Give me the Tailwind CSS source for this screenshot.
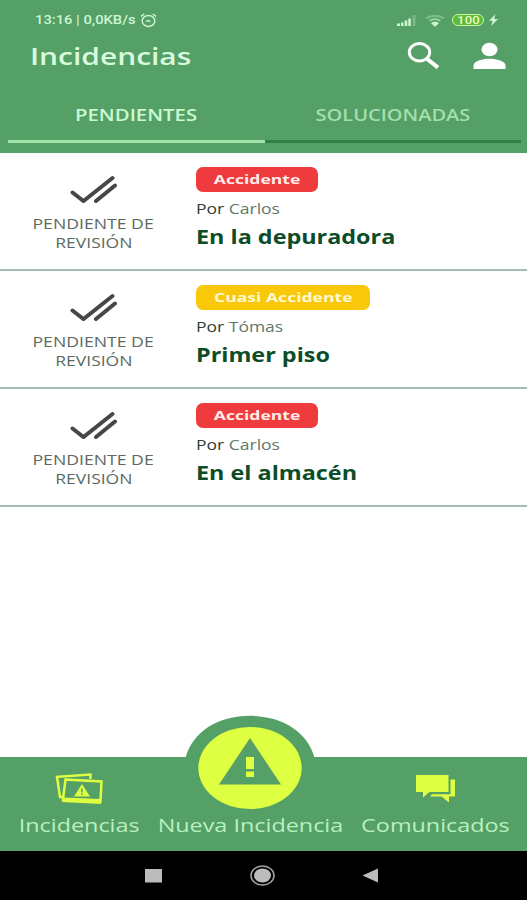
<!DOCTYPE html>
<html lang="es">
<head>
    <meta charset="UTF-8">
    <meta name="viewport" content="width=device-width, initial-scale=1.0">
    <title>Incidencias</title>
    <script src="https://cdn.jsdelivr.net/npm/@tailwindcss/browser@4"></script>
</head>
<body class="w-[527px] h-[900px] overflow-hidden bg-[#fefffe] flex flex-col whitespace-nowrap font-['Open_Sans','Noto_Sans',sans-serif]">
    <header class="h-[153px] shrink-0 bg-[#54a066] flex flex-col">
        <!-- Status bar -->
        <div class="h-8 pt-[11px] pl-[35px] pr-[29px] flex items-start justify-between text-[#cdf5d2]">
            <div class="flex">
                <div class="w-[105px] h-[18px]"><span class="block w-max origin-left scale-x-[1.23] font-[Roboto] font-medium text-xs leading-[18px]">13:16 | 0,0KB/s</span></div>
                <svg class="w-[17px] h-[15px] mt-[2px]" viewBox="0 0 17 15" fill="none" stroke="currentColor" stroke-width="1.4">
                    <ellipse cx="8.5" cy="8" rx="6.3" ry="5.5"/>
                    <path d="M1 3.4 4.3 1M16 3.4 12.7 1M6 8h4.5"/>
                </svg>
            </div>
            <div class="flex">
                <svg class="w-5 h-3 mt-[4px]" viewBox="0 0 20 12">
                    <path fill="currentColor" d="M0 8.5h3V11H0zM4 7.5h2.6V11H4zM7.7 5.5h2.6V11H7.7zM11.3 3.5h2.5V11h-2.5z"/>
                    <path fill="currentColor" opacity=".3" d="M15.5 0h3v11h-3z"/>
                </svg>
                <svg class="w-5 h-3 ml-2 mt-[4px]" viewBox="0 0 20 12" fill="none" stroke="currentColor">
                    <path stroke-width="2" opacity=".35" d="M1 3.3Q10-1.5 19 3.3"/>
                    <path stroke-width="1.7" opacity=".6" d="M4.5 5.8Q10 2.5 15.5 5.8"/>
                    <path fill="currentColor" stroke="none" d="M6 8.2Q10 5.5 14 8.2L10 11.8z"/>
                </svg>
                <div class="w-8 h-3 ml-[7px] mt-[3px] rounded-full border-[1.5px] border-[#cdf5a0] bg-[#5fb93c] flex items-center justify-center">
                    <span class="block scale-x-[1.2] font-[Roboto] font-medium text-[11px] leading-none text-[#e4fbc0]">100</span>
                </div>
                <svg class="w-[9px] h-3 ml-[5px] mt-[3px]" viewBox="0 0 9 12"><path fill="currentColor" d="M6.5 0 0 6.7h3.6L2.2 12 9 5H5.2z"/></svg>
            </div>
        </div>
        <!-- Title bar -->
        <div class="h-[50px] pl-[30px] pr-[21px] flex justify-between text-white">
            <h1 class="w-max h-12 origin-left scale-x-[1.3] font-semibold text-[23px] leading-[49px] text-[#d9fadd]">Incidencias</h1>
            <div class="flex pt-[10px]">
                <svg class="w-[33px] h-[27px]" viewBox="0 0 33 27" fill="none" stroke="currentColor">
                    <ellipse cx="12.5" cy="10.2" rx="10.2" ry="8.7" stroke-width="3"/>
                    <path stroke-width="4" d="M19.5 16.5 31 25.5"/>
                </svg>
                <svg class="w-[33px] h-[28px] ml-[33px]" viewBox="0 0 33 28" fill="currentColor">
                    <ellipse cx="16.5" cy="7.5" rx="8" ry="6.7"/>
                    <path d="M.5 27v-3.3C.5 19 9.5 16.8 16.5 16.8S32.5 19 32.5 23.7V27z"/>
                </svg>
            </div>
        </div>
        <!-- Tabs -->
        <nav class="ml-2 mr-[6px] pt-[19px] grid grid-cols-2 text-base leading-7 font-semibold">
            <div class="h-[42px] flex justify-center border-b-[3px] border-[#a2e5a8] text-[#cdf9d2]"><span class="block h-7 scale-x-[1.27]">PENDIENTES</span></div>
            <div class="h-[42px] flex justify-center border-b-[3px] border-[#2f8046] text-[#a4deac]"><span class="block h-7 scale-x-[1.25]">SOLUCIONADAS</span></div>
        </nav>
    </header>

    <main id="list" class="flex-1"></main>

    <!-- Bottom navigation -->
    <footer class="relative h-[94px] shrink-0 bg-[#54a066] text-[#b9f0c0] text-[19px] leading-7">
        <svg class="absolute left-[183px] -top-[42px] w-[134px] h-[95px]" viewBox="0 0 134 95">
            <path fill="#54a066" d="M2.5 43C9 17 35 .8 67 .8S125 17 131.5 43z"/>
            <ellipse cx="67" cy="53" rx="51.7" ry="41" fill="#deff42"/>
            <path fill="#54a066" d="M67 23 98 69.5H36z"/>
            <path fill="#deff42" d="M63 42h8v12h-8zM63 56.5h8V62h-8z"/>
        </svg>
        <div class="h-full grid grid-cols-[158px_184px_185px]">
            <div class="flex flex-col items-center pt-[16px]">
                <svg class="w-12 h-8" viewBox="0 0 48 32" fill="none" stroke="#deff42">
                    <path stroke-width="2.5" d="M35.5 6V1.5L2 3.8 5 24h4"/>
                    <path stroke-width="2.5" d="M10.5 6.5 46.5 8.5 45.5 28.5 8 26.5z"/>
                    <path fill="#deff42" stroke="none" d="M8 24.5 46 26v5L7 29z"/>
                    <path fill="#deff42" stroke="none" d="M27 11 35 23.5H19z"/>
                    <path stroke="#54a066" stroke-width="1.5" d="M27 15.5v4M27 20.5v1.5"/>
                </svg>
                <span class="block mt-[6px] scale-x-[1.23]">Incidencias</span>
            </div>
            <div class="flex justify-center pt-[54px]">
                <span class="block scale-x-[1.23]">Nueva Incidencia</span>
            </div>
            <div class="flex flex-col items-center pt-[16px] pl-px">
                <svg class="w-10 h-8" viewBox="0 0 40 32" fill="#deff42">
                    <path d="M1 2h32.5v17H14.5L8 24.5V19H1z"/>
                    <path d="M35.5 6.5H40V23.5H34V29.5L26.5 23.5H15L17 21.2H35.5z"/>
                </svg>
                <span class="block mt-[6px] scale-x-[1.23]">Comunicados</span>
            </div>
        </div>
    </footer>

    <!-- System buttons -->
    <div class="h-[49px] shrink-0 bg-black">
        <svg class="w-full h-[49px]" viewBox="0 0 527 49" fill="#bcbcbc">
            <path d="M145 18h17v13.5h-17z"/>
            <ellipse cx="262.5" cy="24.5" rx="8.5" ry="7"/>
            <ellipse cx="262.5" cy="24.5" rx="11.5" ry="9.5" fill="none" stroke="#a5a5a5" stroke-width="1.5"/>
            <path d="M362.5 24.5 378 17.5v14z"/>
        </svg>
    </div>

    <script>
        const incidents = [
            { type: "Accidente", author: "Carlos", title: "En la depuradora" },
            { type: "Cuasi Accidente", author: "Tómas", title: "Primer piso" },
            { type: "Accidente", author: "Carlos", title: "En el almacén" },
        ];
        const badges = {
            "Accidente": "w-[122px] bg-[#ef3b3d] text-[#ffecea]",
            "Cuasi Accidente": "w-[174px] bg-[#fac80b] text-[#fff9d0]",
        };

        document.getElementById("list").innerHTML = incidents.map((item) => `
            <div class="h-[118px] flex border-b-2 border-[#a3bdb0]">
                <div class="w-[187px] pt-[22px] flex flex-col items-center text-sm leading-[19px] text-[#5b6960]">
                    <svg class="w-12 h-7 mb-[11px]" viewBox="0 0 48 28" fill="none" stroke="#49464a" stroke-width="4" stroke-linecap="round">
                        <path d="M2.5 17.5 13.5 26 42.5 3M26 26 45 10.5"/>
                    </svg>
                    <span class="block scale-x-[1.26]">PENDIENTE DE</span>
                    <span class="block scale-x-[1.25]">REVISIÓN</span>
                </div>
                <div class="pt-[14px] pl-[9px]">
                    <div class="${badges[item.type]} h-[25px] rounded-[7px] flex justify-center">
                        <span class="block scale-x-[1.35] font-bold text-[13px] leading-[25px]">${item.type}</span>
                    </div>
                    <p class="mt-[7px] w-max origin-left scale-x-[1.25] text-sm leading-5 text-[#303c35]">Por <span class="text-[#5f786a]">${item.author}</span></p>
                    <h2 class="mt-[5px] w-max origin-left scale-x-[1.23] font-bold text-[19px] leading-[26px] text-[#0d4c28]">${item.title}</h2>
                </div>
            </div>
        `).join("");
    </script>
</body>
</html>
